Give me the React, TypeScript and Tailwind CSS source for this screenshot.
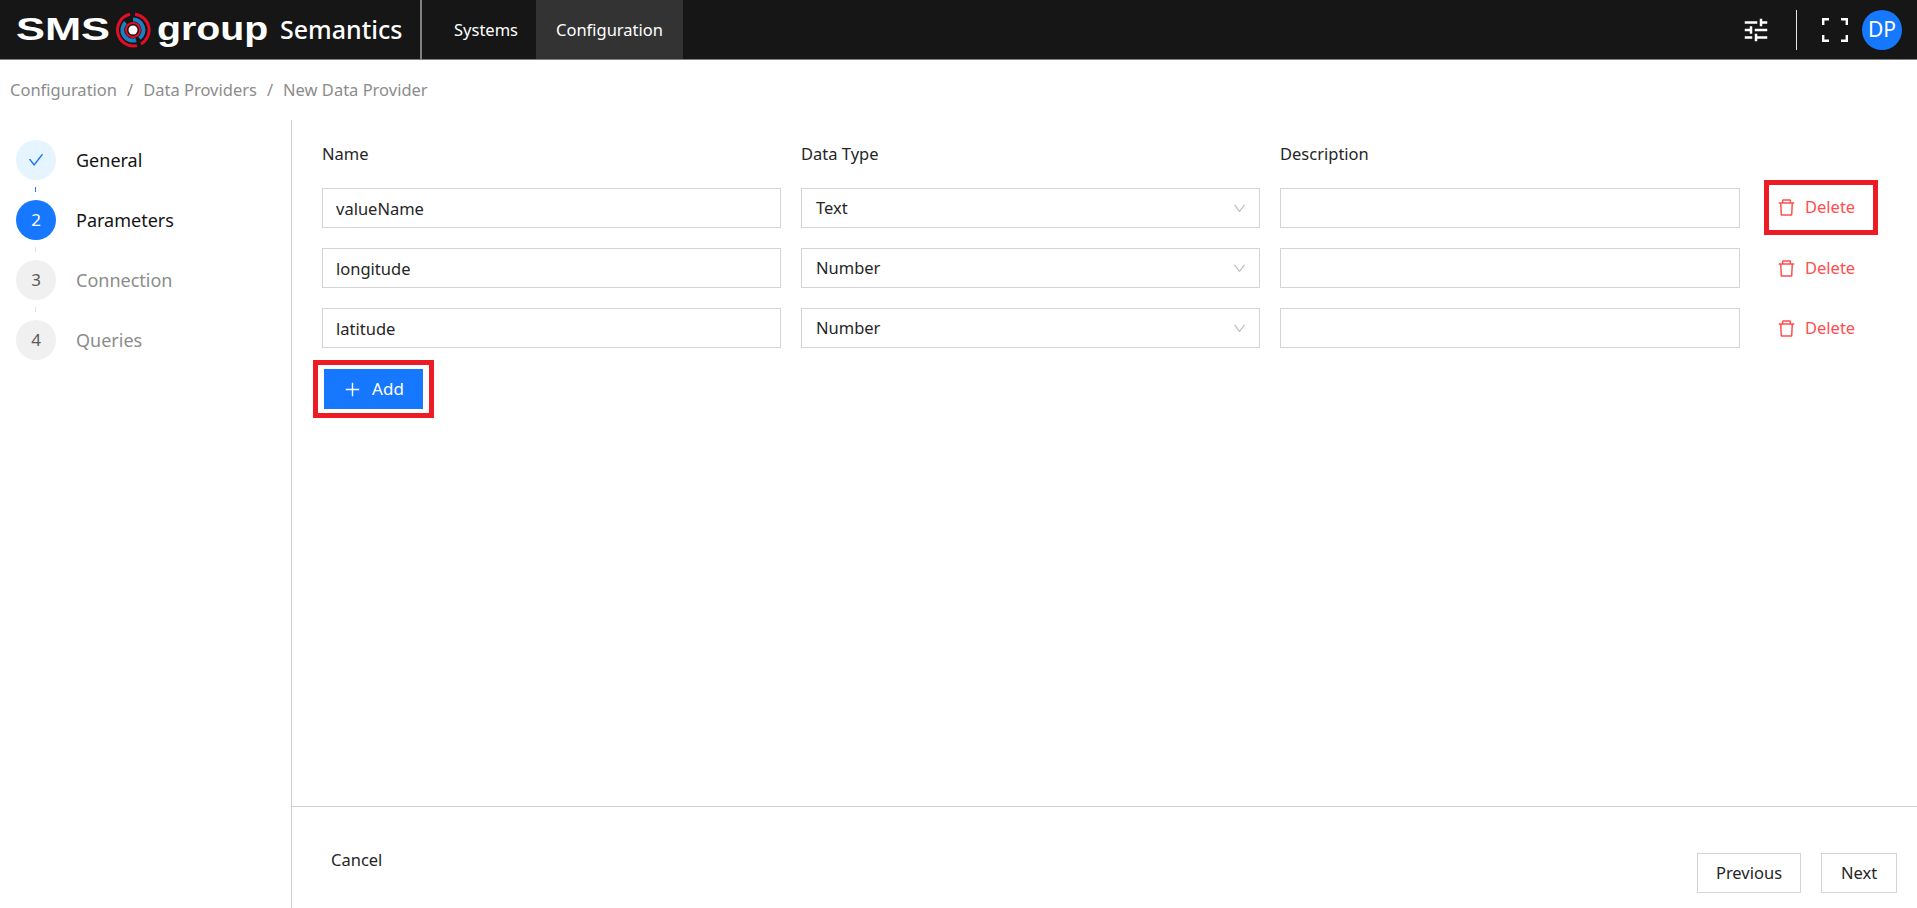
import { AiOutlineCheck, AiOutlineDelete, AiOutlineDown, AiOutlinePlus } from 'react-icons/ai';
import { MdTune } from 'react-icons/md';

const params = [
  { name: 'valueName', type: 'Text' },
  { name: 'longitude', type: 'Number' },
  { name: 'latitude', type: 'Number' },
];

const steps = [
  { label: 'General', state: 'done' },
  { label: 'Parameters', state: 'active' },
  { label: 'Connection', state: 'todo' },
  { label: 'Queries', state: 'todo' },
];

function SmsMark() {
  return (
    <svg width="36" height="36" viewBox="0 0 36 36" fill="none" className="shrink-0">
      <path d="M20 2.2A16 16 0 0 1 26 32" stroke="#e30d25" strokeWidth="3" />
      <path d="M22 33.6A16 16 0 0 1 15 2.3" stroke="#e30d25" strokeWidth="3" />
      <path d="M18 7.5A10.5 10.5 0 0 1 24.5 26.2" stroke="#1b7fc4" strokeWidth="4" />
      <path d="M21 28A10.5 10.5 0 0 1 10.5 10.5" stroke="#1b7fc4" strokeWidth="4" />
      <circle cx="18" cy="18" r="7" stroke="#e30d25" strokeWidth="2" />
      <circle cx="18" cy="18" r="4.5" fill="#fff" />
    </svg>
  );
}

function Header() {
  return (
    <header className="flex h-[60px] shrink-0 items-stretch border-b border-[#808080] bg-[#161616] text-white">
      <div className="flex w-[422px] items-center border-r-2 border-[#808080] pl-[16px]">
        <span className="w-[94px] origin-left scale-x-[1.4] font-['Liberation_Sans'] text-[31px] font-bold leading-none">SMS</span>
        <span className="ml-[5px] w-[36px]"><SmsMark /></span>
        <span className="ml-[6px] w-[116px] origin-left scale-x-[1.19] pb-[3px] font-['Liberation_Sans'] text-[33px] font-bold leading-none">group</span>
        <span className="ml-[7px] text-[25px] font-medium">Semantics</span>
      </div>
      <nav className="flex pt-[1px] text-[16.5px]">
        <a className="flex w-[114px] items-center justify-center pl-[14px]">Systems</a>
        <a className="-mt-[1px] flex w-[147px] items-center justify-center bg-[#333333] pt-[1px]">Configuration</a>
      </nav>
      <div className="ml-auto flex items-center">
        <MdTune size={30} className="mr-[25px]" />
        <div className="mr-[25px] h-[40px] w-px bg-[#e5e5e5]" />
        <svg width="26" height="24" viewBox="0 0 26 24" fill="none" stroke="#fff" strokeWidth="2.4" className="mr-[14px]">
          <path d="M1.2 7V1.2H7M19 1.2h5.8V7M24.8 17v5.8H19M7 22.8H1.2V17" />
        </svg>
        <div className="mr-[15px] flex h-10 w-10 items-center justify-center rounded-full bg-[#1677ff] text-[21px]">DP</div>
      </div>
    </header>
  );
}

function Stepper() {
  return (
    <aside className="w-[292px] shrink-0 border-r border-[#cfcfcf] pl-4 pt-5">
      {steps.map((step, i) => (
        <div key={step.label} className="relative mb-5 flex h-10 items-center">
          {step.state === 'done' && (
            <div className="flex h-10 w-10 items-center justify-center rounded-full bg-[#e6f4ff] text-[#1677ff]">
              <AiOutlineCheck size={18} />
            </div>
          )}
          {step.state === 'active' && (
            <div className="flex h-10 w-10 items-center justify-center rounded-full bg-[#1677ff] text-[17px] text-white">{i + 1}</div>
          )}
          {step.state === 'todo' && (
            <div className="flex h-10 w-10 items-center justify-center rounded-full bg-[#f0f0f0] text-[17px] text-[#595959]">{i + 1}</div>
          )}
          <span className={step.state === 'todo' ? 'ml-5 text-[18px] text-[#8c8c8c]' : 'ml-5 text-[18px] text-[#141414]'}>{step.label}</span>
          {i < 3 && (
            <div className={i === 0 ? 'absolute left-[19px] top-[47px] h-[5px] w-px bg-[#1677ff]' : 'absolute left-[19px] top-[47px] h-[5px] w-px bg-[#e0e0e0]'} />
          )}
        </div>
      ))}
    </aside>
  );
}

function ParamRow({ name, type, index }: { name: string; type: string; index: number }) {
  const first = index === 0;
  return (
    <>
      <input
        readOnly
        defaultValue={name}
        className="h-10 border border-[#d4d4d4] px-[13px] text-[16.5px] text-[#262626] outline-none"
      />
      <div className="flex h-10 items-center justify-between border border-[#d4d4d4] pl-[14px] pr-[12px] text-[16.5px] text-[#262626]">
        {type}
        <AiOutlineDown size={15} className="text-[#bfbfbf]" />
      </div>
      <input readOnly className="h-10 border border-[#d4d4d4] px-[13px] text-[16.5px] outline-none" />
      <button
        className={
          first
            ? 'ml-[4px] -my-2 flex h-[55px] w-[114px] items-center gap-[8px] border-[5px] border-[#ed1c24] pl-[7px] text-[16.5px] text-[#ff4d4f]'
            : 'ml-[4px] flex h-10 w-[114px] items-center gap-[8px] pl-[12px] text-[16.5px] text-[#ff4d4f]'
        }
      >
        <AiOutlineDelete size={21} />
        Delete
      </button>
    </>
  );
}

export default function App() {
  return (
    <div className="flex h-screen flex-col bg-white font-['Noto_Sans',sans-serif]">
      <Header />
      <div className="flex h-[60px] shrink-0 items-center pl-[10px] text-[16.5px] text-[#8c8c8c]">
        Configuration<span className="mx-[10px]">/</span>Data Providers<span className="mx-[10px]">/</span>New Data Provider
      </div>
      <div className="flex min-h-0 flex-1">
        <Stepper />
        <main className="flex min-w-0 flex-1 flex-col">
          <div className="flex-1 pl-[30px] pt-[21px]">
            <div className="grid grid-cols-[459px_459px_460px_auto] justify-start gap-x-[20px] gap-y-[20px]">
              <div className="h-[27px] pt-[1px] text-[16.5px] text-[#262626]">Name</div>
              <div className="h-[27px] pt-[1px] text-[16.5px] text-[#262626]">Data Type</div>
              <div className="h-[27px] pt-[1px] text-[16.5px] text-[#262626]">Description</div>
              <div />
              {params.map((p, i) => (
                <ParamRow key={p.name} name={p.name} type={p.type} index={i} />
              ))}
            </div>
            <div className="-ml-[9px] mt-[12px] w-[121px] border-[5px] border-[#ed1c24] px-1.5 py-1">
              <button className="flex h-10 w-full items-center justify-center gap-[10px] bg-[#1677ff] text-[17px] text-white">
                <AiOutlinePlus size={19} />
                Add
              </button>
            </div>
          </div>
          <footer className="flex h-[102px] shrink-0 items-start justify-between border-t border-[#cfcfcf] pl-[40px] pr-5 pt-[46px]">
            <button className="-mt-[5px] -ml-[1px] text-[16.5px] text-[#262626]">Cancel</button>
            <div className="flex gap-5">
              <button className="h-10 w-[104px] border border-[#d4d4d4] pt-[1px] text-[16.5px] text-[#262626]">Previous</button>
              <button className="h-10 w-[76px] border border-[#d4d4d4] pt-[1px] text-[16.5px] text-[#262626]">Next</button>
            </div>
          </footer>
        </main>
      </div>
    </div>
  );
}
